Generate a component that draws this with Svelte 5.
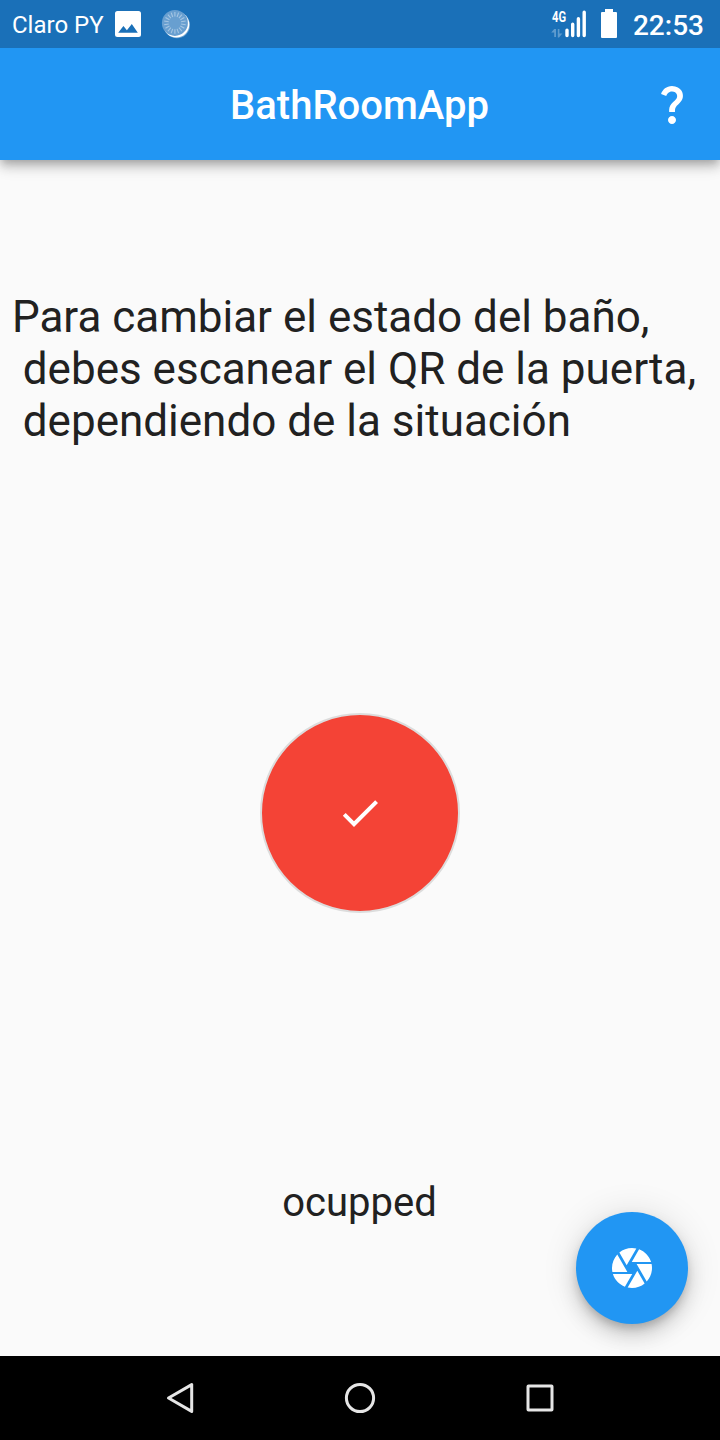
<script>
  const lines = 'Para cambiar el estado del baño,\n debes escanear el QR de la puerta,\n dependiendo de la situación';
  const ticks = Array.from({ length: 18 }, (_, i) => i * 20);
</script>

<div class="screen">
  <div class="status">
    <span class="carrier">Claro PY</span>
    <svg class="picture" width="26" height="26" viewBox="0 0 26 26">
      <path fill="#fff" fill-rule="evenodd" d="M2.500 0h21a2.500 2.500 0 0 1 2.500 2.500v21a2.500 2.500 0 0 1-2.500 2.500h-21a2.500 2.500 0 0 1-2.500-2.500v-21a2.500 2.500 0 0 1 2.500-2.500zM3.200 21.700h19.600L16.800 13l-4.900 6.300-3.500-4.200z" />
    </svg>
    <svg class="sync" width="30" height="30" viewBox="0 0 30 30">
      <circle cx="16" cy="16.200" r="13" fill="#fff" fill-opacity=".35" />
      <circle cx="15.300" cy="15.500" r="13" fill="#fff" />
      <circle cx="13.900" cy="13.900" r="13" fill="#689fd0" />
      {#each ticks as angle}
        <path d="M13.900 3v4.600" stroke="#a5c6e3" stroke-width="1.100" transform="rotate({angle} 13.9 13.9)" />
      {/each}
    </svg>
    <div class="spacer"></div>
    <div class="network">
      <div class="mode">
        <span>4G</span>
        <svg width="12" height="9" viewBox="0 0 12 9" fill="#5e9bce">
          <path d="M3.200 0h1.800v8H3.200V3.400H.2z M6.800 0h1.600v4.600h3L8 8.500H6.800z" />
        </svg>
      </div>
      <svg width="22" height="28" viewBox="0 0 22 28" stroke="#fff" stroke-width="3.400" stroke-linecap="round">
        <path d="M2 20.200v5.300M7.700 14.200v11.300M13.400 8.700v16.800M19.200 2.300v23.200" />
      </svg>
    </div>
    <svg class="battery" width="16" height="29" viewBox="0 0 16 29" fill="#fff">
      <path d="M4 0h8v3h3a1 1 0 0 1 1 1v24a1 1 0 0 1-1 1H1a1 1 0 0 1-1-1V4a1 1 0 0 1 1-1h3z" />
    </svg>
    <span class="time">22:53</span>
  </div>

  <header>
    <h1>BathRoomApp</h1>
    <button class="help" aria-label="Ayuda">
      <svg width="48" height="48" viewBox="0 0 24 24" fill="#fff">
        <path d="M11.070 12.850c.77-1.390 2.250-2.210 3.110-3.440.91-1.290.4-3.700-2.180-3.700-1.690 0-2.520 1.280-2.870 2.340L6.540 6.960C7.250 4.830 9.180 3 11.990 3c2.350 0 3.960 1.070 4.780 2.410.7 1.150 1.110 3.300.03 4.900-1.200 1.770-2.350 2.310-2.970 3.450-.25.46-.35.76-.35 2.240h-2.890c-.01-.78-.13-2.050.48-3.150zM14 20c0 1.100-.9 2-2 2s-2-.9-2-2 .9-2 2-2 2 .9 2 2z" />
      </svg>
    </button>
  </header>

  <main>
    <p class="message">{lines}</p>
    <div class="state">
      <svg width="48" height="48" viewBox="0 0 24 24" fill="#fff">
        <path d="M9 16.170L4.830 12l-1.420 1.410L9 19 21 7l-1.410-1.410z" />
      </svg>
    </div>
    <p class="label">ocupped</p>
    <button class="fab" aria-label="Escanear">
      <svg width="48" height="48" viewBox="0 0 24 24" fill="#fff">
        <path d="M9.400 10.500l4.770-8.260C13.470 2.090 12.750 2 12 2c-2.400 0-4.600.85-6.320 2.250l3.660 6.350.06-.1zM21.540 9c-.92-2.920-3.150-5.260-6-6.340L11.880 9h9.660zm.26 1h-7.490l.29.5 4.760 8.250C21 16.970 22 14.610 22 12c0-.69-.07-1.350-.2-2zM8.540 12l-3.900-6.750C3.010 7.030 2 9.390 2 12c0 .69.07 1.350.2 2h7.490l-1.150-2zm-6.080 3c.92 2.920 3.150 5.260 6 6.340L12.120 15H2.460zm11.270 0l-3.900 6.760c.7.15 1.420.24 2.170.24 2.400 0 4.600-.85 6.320-2.250l-3.660-6.350-.93 1.600z" />
      </svg>
    </button>
  </main>

  <nav>
    <svg width="36" height="36" viewBox="0 0 36 36"><path d="M6.500 18L29.700 4.600v26.800z" /></svg>
    <svg width="36" height="36" viewBox="0 0 36 36"><circle cx="18" cy="18" r="13.600" /></svg>
    <svg width="36" height="36" viewBox="0 0 36 36"><rect x="6" y="6" width="24" height="24" rx=".5" /></svg>
  </nav>
</div>

<style>
  :global(body) {
    margin: 0;
  }
  .screen {
    width: 720px;
    height: 1440px;
    display: flex;
    flex-direction: column;
    overflow: hidden;
    background: #fafafa;
    color: #212121;
    font-family: Roboto, sans-serif;
  }
  svg {
    display: block;
    flex: none;
  }
  button {
    border: 0;
    padding: 0;
    background: none;
  }
  .status {
    height: 48px;
    flex: none;
    display: flex;
    align-items: center;
    box-sizing: border-box;
    padding: 0 16px 0 12px;
    background: #1a70b8;
    color: #fff;
    z-index: 2;
  }
  .carrier {
    width: 103px;
    font-size: 24px;
    line-height: 48px;
    padding-top: 2px;
    white-space: nowrap;
  }
  .sync {
    margin-left: 20px;
  }
  .spacer {
    flex: 1;
  }
  .network {
    display: flex;
    align-items: flex-end;
    gap: 1px;
    height: 28px;
  }
  .mode {
    width: 13px;
    height: 28px;
    display: flex;
    flex-direction: column;
    justify-content: space-between;
  }
  .mode span {
    font-size: 14px;
    line-height: 14px;
    font-weight: 700;
    transform: translateX(1px) scaleX(.8);
    transform-origin: left;
  }
  .battery {
    margin: 0 16px 2px 14px;
  }
  .time {
    font-size: 28px;
    line-height: 48px;
    font-weight: 500;
    padding-top: 4px;
  }
  header {
    height: 112px;
    flex: none;
    display: grid;
    grid-template-columns: 96px 1fr 96px;
    align-items: center;
    background: #2196f3;
    color: #fff;
    z-index: 1;
    box-shadow: 0 4px 8px -2px rgba(0, 0, 0, .2), 0 8px 10px rgba(0, 0, 0, .14), 0 2px 20px rgba(0, 0, 0, .12);
  }
  h1 {
    grid-column: 2;
    margin: 0;
    padding: 4px 1px 0 0;
    text-align: center;
    font-size: 40px;
    line-height: 48px;
    font-weight: 500;
  }
  .help {
    display: grid;
    place-items: center;
  }
  main {
    flex: 1;
    position: relative;
    display: flex;
    flex-direction: column;
    align-items: center;
    justify-content: space-between;
    box-sizing: border-box;
    padding: 131px 0 130px;
  }
  p {
    margin: 0;
  }
  .message {
    padding-right: 12px;
    font-size: 44px;
    line-height: 52px;
    white-space: pre;
  }
  .state {
    width: 200px;
    height: 200px;
    box-sizing: border-box;
    display: grid;
    place-items: center;
    border: 2px solid #dcdcdc;
    border-radius: 50%;
    background: #f44336;
  }
  .label {
    padding-right: 1px;
    font-size: 40px;
    line-height: 47px;
  }
  .fab {
    position: absolute;
    right: 32px;
    bottom: 32px;
    width: 112px;
    height: 112px;
    display: grid;
    place-items: center;
    border-radius: 50%;
    background: #2196f3;
    box-shadow: 0 6px 10px -2px rgba(0, 0, 0, .2), 0 12px 20px rgba(0, 0, 0, .14), 0 2px 36px rgba(0, 0, 0, .12);
  }
  nav {
    height: 84px;
    flex: none;
    display: flex;
    align-items: center;
    justify-content: center;
    gap: 144px;
    background: #000;
    z-index: 2;
  }
  nav svg {
    fill: none;
    stroke: #e6e6e6;
    stroke-width: 3;
    stroke-linejoin: round;
  }
</style>
